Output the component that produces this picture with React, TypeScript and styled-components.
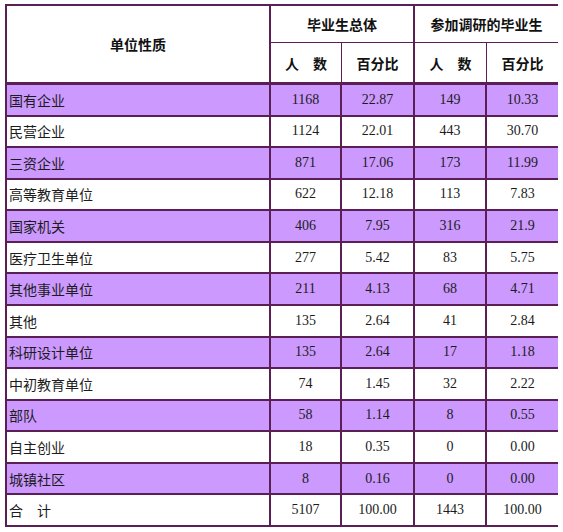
import React from "react";
import styled, { createGlobalStyle } from "styled-components";

const Global = createGlobalStyle`
  html, body { margin: 0; padding: 0; background: #ffffff; }
  body { font-family: "Liberation Serif", "Noto Sans CJK SC", serif; }
`;

const LINE = "#5b1e55";
const LAV = "#cc99ff";

const Page = styled.div`
  padding: 4px 0 0 5px;
`;

const Table = styled.div`
  display: grid;
  grid-template-columns: 264px 71px 73px 72px 71px;
  grid-template-rows: 37px 42px repeat(14, 31.57px);
  width: 551px;
  border-top: 2px solid ${LINE};
  border-left: 2px solid ${LINE};
`;

const HeadCell = styled.div<{ $span?: number; $rows?: number; $thinRight?: boolean; $noRight?: boolean; $bottom: number }>`
  grid-column: span ${(p) => p.$span ?? 1};
  grid-row: span ${(p) => p.$rows ?? 1};
  display: flex;
  align-items: center;
  justify-content: center;
  box-sizing: border-box;
  border-right: ${(p) => (p.$noRight ? "none" : `${p.$thinRight ? 1 : 2}px solid ${LINE}`)};
  border-bottom: ${(p) => p.$bottom}px solid ${LINE};
  font-family: "Noto Sans CJK SC", "Liberation Sans", sans-serif;
  font-weight: 700;
  font-size: 14px;
  color: #111;
  white-space: pre;
`;

const NameCell = styled.div<{ $shade: boolean }>`
  display: flex;
  align-items: center;
  padding-left: 2px;
  box-sizing: border-box;
  background: ${(p) => (p.$shade ? LAV : "#fff")};
  border-right: 2px solid ${LINE};
  border-bottom: 2px solid ${LINE};
  font-family: "Noto Sans CJK SC", serif;
  font-size: 14px;
  color: #1c1c1c;
  white-space: pre;
`;

const NumCell = styled.div<{ $shade: boolean; $last?: boolean }>`
  display: flex;
  align-items: center;
  justify-content: center;
  box-sizing: border-box;
  background: ${(p) => (p.$shade ? LAV : "#fff")};
  border-right: ${(p) => (p.$last ? "none" : `2px solid ${LINE}`)};
  border-bottom: 2px solid ${LINE};
  font-family: "Liberation Serif", "Times New Roman", serif;
  font-size: 14px;
  color: #1c1c1c;
`;

const rows: [string, string, string, string, string][] = [
  ["国有企业", "1168", "22.87", "149", "10.33"],
  ["民营企业", "1124", "22.01", "443", "30.70"],
  ["三资企业", "871", "17.06", "173", "11.99"],
  ["高等教育单位", "622", "12.18", "113", "7.83"],
  ["国家机关", "406", "7.95", "316", "21.9"],
  ["医疗卫生单位", "277", "5.42", "83", "5.75"],
  ["其他事业单位", "211", "4.13", "68", "4.71"],
  ["其他", "135", "2.64", "41", "2.84"],
  ["科研设计单位", "135", "2.64", "17", "1.18"],
  ["中初教育单位", "74", "1.45", "32", "2.22"],
  ["部队", "58", "1.14", "8", "0.55"],
  ["自主创业", "18", "0.35", "0", "0.00"],
  ["城镇社区", "8", "0.16", "0", "0.00"],
  ["合\u3000计", "5107", "100.00", "1443", "100.00"],
];

export default function App() {
  return (
    <>
      <Global />
      <Page>
        <Table>
          <HeadCell $rows={2} $bottom={3}>单位性质</HeadCell>
          <HeadCell $span={2} $bottom={1}>毕业生总体</HeadCell>
          <HeadCell $span={2} $bottom={1} $noRight>参加调研的毕业生</HeadCell>
          <HeadCell $thinRight $bottom={3}>{"人\u3000数"}</HeadCell>
          <HeadCell $bottom={3}>百分比</HeadCell>
          <HeadCell $thinRight $bottom={3}>{"人\u3000数"}</HeadCell>
          <HeadCell $noRight $bottom={3}>百分比</HeadCell>
          {rows.map((r, i) => {
            const shade = i % 2 === 0 && i < 13;
            return (
              <React.Fragment key={i}>
                <NameCell $shade={shade}>{r[0]}</NameCell>
                <NumCell $shade={shade}>{r[1]}</NumCell>
                <NumCell $shade={shade}>{r[2]}</NumCell>
                <NumCell $shade={shade}>{r[3]}</NumCell>
                <NumCell $shade={shade} $last>{r[4]}</NumCell>
              </React.Fragment>
            );
          })}
        </Table>
      </Page>
    </>
  );
}
